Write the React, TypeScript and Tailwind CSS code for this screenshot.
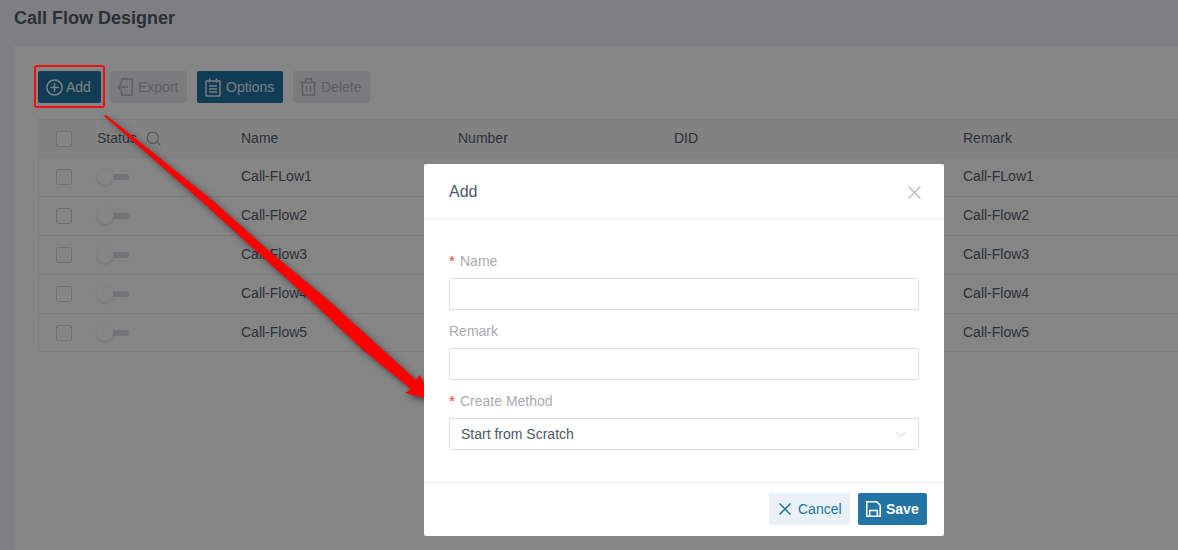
import {Search} from "lucide-react";

const rows = [
    {name: "Call-FLow1"},
    {name: "Call-Flow2"},
    {name: "Call-Flow3"},
    {name: "Call-Flow4"},
    {name: "Call-Flow5"},
];

function AddIcon() {
    return (
        <svg width="17" height="17" viewBox="0 0 17 17" fill="none" stroke="currentColor" strokeWidth="1.5">
            <circle cx="8.5" cy="8.5" r="7.6"/>
            <path d="M8.5 4.2v8.6M4.2 8.5h8.6"/>
        </svg>
    );
}

function ExportIcon() {
    return (
        <svg width="16" height="18" viewBox="0 0 16 18" fill="none" stroke="currentColor" strokeWidth="1.5">
            <path d="M4.500 5V1h10.700v16H4.500v-4"/>
            <path d="M11 9H1M4.500 5.500 1 9l3.500 3.500"/>
        </svg>
    );
}

function OptionsIcon() {
    return (
        <svg width="16" height="19" viewBox="0 0 16 19" fill="none" stroke="currentColor" strokeWidth="1.5">
            <rect x="1" y="3" width="14" height="15" rx="0.5"/>
            <path d="M4.500 0.500v4M11.500 0.500v4M4 8h8M4 11h8M4 14h8"/>
        </svg>
    );
}

function DeleteIcon() {
    return (
        <svg width="17" height="18" viewBox="0 0 17 18" fill="none" stroke="currentColor" strokeWidth="1.5">
            <path d="M0.500 4.500h16M5.500 4.500V1h6v3.500M2.500 4.500V17h12V4.500M6.500 8v5.500M10.500 8v5.500"/>
        </svg>
    );
}

function SaveIcon() {
    return (
        <svg width="15" height="16" viewBox="0 0 15 16" fill="none" stroke="currentColor" strokeWidth="1.5">
            <path d="M0.800 0.800h10l3.400 3.400v11H0.800z"/>
            <path d="M3.700 15.200V9.500h7.600v5.700"/>
        </svg>
    );
}

function CloseIcon({size, width}: {size: number; width: number}) {
    return (
        <svg width={size} height={size} viewBox="0 0 12 12" fill="none" stroke="currentColor" strokeWidth={width}>
            <path d="M0.500 0.500 11.500 11.500M11.500 0.500 0.500 11.500"/>
        </svg>
    );
}

function Toggle() {
    return (
        <div className="flex items-center w-8 h-4 relative">
            <div className="w-4 h-4 rounded-full bg-white shadow-[0_1px_3px_rgba(0,0,0,0.15)] shrink-0"/>
            <div className="w-4 h-1.5 bg-[#dcdfe6] rounded-r-full"/>
        </div>
    );
}

function Checkbox() {
    return <div className="w-4 h-4 border border-[#d4d7de] bg-white rounded-[2px] shrink-0"/>;
}

function Field({label, required, children}: {label: string; required?: boolean; children: React.ReactNode}) {
    return (
        <div>
            <div className="h-[18px] flex items-center text-[14px] text-[#a8abb2] mb-2">
                {required && <span className="text-[#ee3a1f] text-[15px] w-[11px]">*</span>}
                {label}
            </div>
            {children}
        </div>
    );
}

export default function App() {
    return (
        <div className="relative w-[1178px] h-[550px] overflow-hidden bg-[#f1f3f6] font-['Liberation_Sans',Arial,sans-serif] text-[14px] text-[#55606f]">
            <div className="h-[46px] pl-3.5 pt-[7px] text-[18px] leading-[22px] font-bold text-[#525c6a]">
                Call Flow Designer
            </div>

            {/* panel */}
            <div className="ml-3.5 bg-white h-[504px] pl-6 pt-[25px]">
                <div className="flex h-8">
                    <button className="w-[63px] pl-2 flex items-center gap-[3px] rounded-[2px] bg-[#2274a5] text-[#f2f4f6]">
                        <AddIcon/>
                        Add
                    </button>
                    <button className="w-[77px] ml-[9px] pl-[7px] flex items-center gap-[5px] rounded-[2px] bg-[#e9ecef] text-[#b4b7bc]">
                        <ExportIcon/>
                        Export
                    </button>
                    <button className="w-[86px] ml-2.5 pl-2 flex items-center gap-[5px] rounded-[2px] bg-[#2274a5] text-[#e6eaee]">
                        <OptionsIcon/>
                        Options
                    </button>
                    <button className="w-[77px] ml-2.5 pl-[7px] flex items-center gap-[4px] rounded-[2px] bg-[#e9ecef] text-[#b4b7bc]">
                        <DeleteIcon/>
                        Delete
                    </button>
                </div>

                <div className="mt-4 w-[1200px] border border-[#ebeef5] text-[14px]">
                    <div className="h-[38px] flex items-center bg-[#fafafa] border-b border-[#ebeef5]">
                        <div className="w-[58px] pl-[17px]"><Checkbox/></div>
                        <div className="w-[144px] flex items-center">
                            Status
                            <Search className="ml-[8px] w-[17px] h-[17px] text-[#a5a8ad]" strokeWidth={1.8}/>
                        </div>
                        <div className="w-[217px]">Name</div>
                        <div className="w-[216px]">Number</div>
                        <div className="w-[289px]">DID</div>
                        <div>Remark</div>
                    </div>
                    {rows.map((row, i) => (
                        <div
                            key={row.name}
                            className={`flex items-center ${i < 4 ? "h-[39px] border-b border-[#ebeef5]" : "h-[37px]"}`}
                        >
                            <div className="w-[58px] pl-[17px]"><Checkbox/></div>
                            <div className="w-[144px]"><Toggle/></div>
                            <div className={`w-[722px] ${i < 4 ? "pb-[2px]" : ""}`}>{row.name}</div>
                            <div className={i < 4 ? "pb-[2px]" : ""}>{row.name}</div>
                        </div>
                    ))}
                </div>
            </div>

            {/* dim layer */}
            <div className="absolute inset-0 bg-black/[0.48]"/>

            {/* red annotation */}
            <div className="absolute left-[34px] top-[65px] w-[71px] h-[43px] border-2 border-[#f01010] rounded-[3px]"/>
            <svg className="absolute left-0 top-0 drop-shadow-[3px_3px_3px_rgba(0,0,0,0.5)]" width="1178" height="550">
                <polygon
                    fill="#ff0000"
                    points="104,116 106,115 212,200 268,250 328,300 383,350 416,380 420,375 432,400 405,393 411,389 363,350 310,300 255,250 200,200"
                />
            </svg>

            {/* modal */}
            <div className="absolute left-[424px] top-[164px] w-[520px] h-[372px] bg-white rounded-[2px] flex flex-col">
                <div className="h-[56px] px-[25px] flex items-center justify-between border-b border-[#ebeef5]">
                    <span className="text-[16px] text-[#4d5765]">Add</span>
                    <span className="text-[#b3b6bc] mr-[-2px] mt-[2px]"><CloseIcon size={13} width={1.1}/></span>
                </div>
                <div className="flex-1 px-[25px] pt-[32px] flex flex-col gap-[12px] border-b border-[#ebeef5]">
                    <Field label="Name" required>
                        <div className="h-8 border border-[#dcdfe6] rounded-[2px]"/>
                    </Field>
                    <Field label="Remark">
                        <div className="h-8 border border-[#dcdfe6] rounded-[2px]"/>
                    </Field>
                    <Field label="Create Method" required>
                        <div className="h-8 border border-[#dcdfe6] rounded-[2px] pl-[11px] pr-[12px] flex items-center justify-between text-[#4d5765]">
                            Start from Scratch
                            <svg width="11" height="7" viewBox="0 0 11 7" fill="none" stroke="#dcdfe6" strokeWidth="1.1">
                                <path d="M0.500 0.700 5.500 6 10.500 0.700"/>
                            </svg>
                        </div>
                    </Field>
                </div>
                <div className="h-[53px] pr-[17px] flex justify-end items-start pt-[10px] gap-2">
                    <button className="w-[81px] h-8 pl-[10px] flex items-center gap-[7px] rounded-[2px] bg-[#e9f1f6] text-[#2274a5]">
                        <CloseIcon size={12} width={1.5}/>
                        Cancel
                    </button>
                    <button className="w-[69px] h-8 pl-2 flex items-center gap-[5px] rounded-[2px] bg-[#2274a5] text-white font-bold">
                        <SaveIcon/>
                        Save
                    </button>
                </div>
            </div>
        </div>
    );
}
